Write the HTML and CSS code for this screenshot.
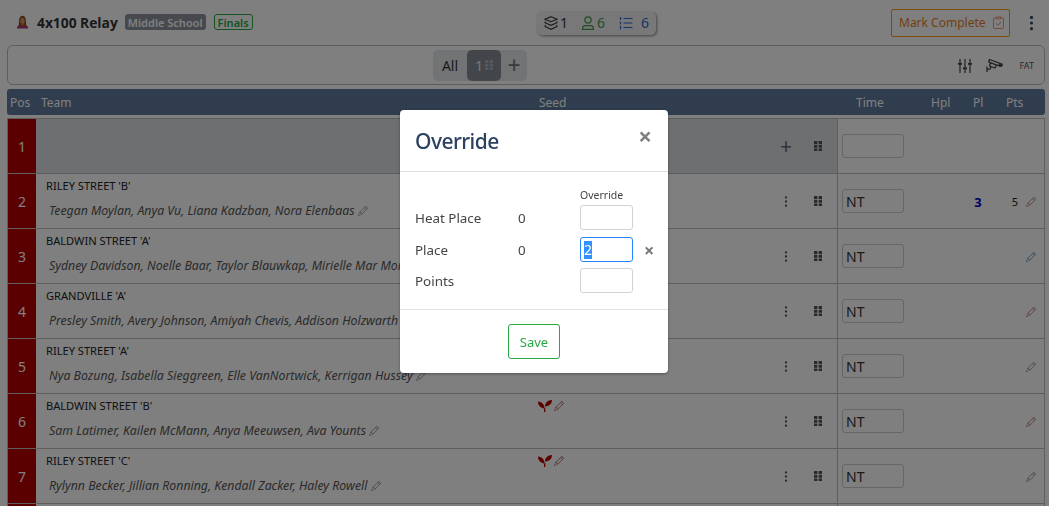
FILE: index.html
```html
<!DOCTYPE html>
<html lang="en">
<head>
<meta charset="utf-8">
<title>4x100 Relay</title>
<link rel="stylesheet" href="styles.css">
</head>
<body>
<svg class="defs" aria-hidden="true">
  <defs>
    <symbol id="pencil" viewBox="0 0 16 16"><path fill="currentColor" d="M12.146.146a.5.5 0 0 1 .708 0l3 3a.5.5 0 0 1 0 .708l-10 10a.5.5 0 0 1-.168.11l-5 2a.5.5 0 0 1-.65-.65l2-5a.5.5 0 0 1 .11-.168l10-10zM11.207 2.5 13.5 4.793 14.793 3.5 12.5 1.207 11.207 2.5zm1.586 3L10.5 3.207 4 9.707V10h.5a.5.5 0 0 1 .5.5v.5h.5a.5.5 0 0 1 .5.5v.5h.293l6.5-6.5zm-9.761 5.175-.106.106-1.528 3.821 3.821-1.528.106-.106A.5.5 0 0 1 5 12.5V12h-.5a.5.5 0 0 1-.5-.5V11h-.5a.5.5 0 0 1-.468-.325z"/></symbol>
    <symbol id="grip" viewBox="0 0 8 10.500"><path fill="currentColor" d="M0 0h3.400v3H0zM4.600 0H8v3H4.600zM0 3.750h3.400v3H0zM4.600 3.750H8v3H4.600zM0 7.500h3.400v3H0zM4.600 7.500H8v3H4.600z"/></symbol>
    <symbol id="kebab" viewBox="0 0 4 12"><circle fill="currentColor" cx="2" cy="1.500" r="1.250"/><circle fill="currentColor" cx="2" cy="6" r="1.250"/><circle fill="currentColor" cx="2" cy="10.500" r="1.250"/></symbol>
    <symbol id="seed" viewBox="0 0 14 12"><path fill="currentColor" d="M6.500 8.500C6.500 4.500 4 1.800 0 1.500C0 5.500 2.500 8 6.500 8.500zM7 6.500C7 2.800 9.500 .3 14 0C14 3.800 11.500 6.200 7 6.500zM6 7.500h1.300V12H6z"/></symbol>
  </defs>
</svg>

<main class="page">
  <header class="top">
    <div class="title-group">
      <svg class="emoji" viewBox="0 0 14 14" aria-hidden="true">
        <path fill="#b0306e" d="M1 14c0-3 2-4.200 6-4.200s6 1.200 6 4.200z"/>
        <path fill="#8a5420" d="M2.600 10.500c.7-1.500.6-3.300.7-5.500C3.500 2 5.200.4 7 .4S10.500 2 10.700 5c.1 2.200 0 4 .7 5.500-2.800.9-6 .9-8.800 0z"/>
        <ellipse fill="#d9925a" cx="7" cy="5.800" rx="2.400" ry="3"/>
        <path fill="#d9925a" d="M6 8h2v2.200H6z"/>
      </svg>
      <h1 class="event-title">4x100 Relay</h1>
      <span class="badge badge-dark">Middle School</span>
      <span class="badge badge-outline">Finals</span>
    </div>
    <div class="counts">
      <span class="count count-dark">
        <svg class="count-icon" viewBox="0 0 14 14" aria-hidden="true"><path fill="none" stroke="currentColor" stroke-width="1.100" d="M7 .7 13 3.200 7 5.700 1 3.200zM1.500 5.500 1 6.800l6 2.500 6-2.500-.5-1.300M1.500 9 1 10.400l6 2.900 6-2.900L12.500 9"/></svg>1
      </span>
      <span class="count count-green">
        <svg class="count-icon" viewBox="0 0 14 14" aria-hidden="true"><circle fill="none" stroke="currentColor" stroke-width="1.200" cx="7" cy="4" r="3.200"/><path fill="none" stroke="currentColor" stroke-width="1.200" d="M1.500 13.300c0-2.500 1-3.600 3-3.600h5c2 0 3 1.100 3 3.600z"/></svg>6
      </span>
      <span class="count count-blue">
        <svg class="count-icon" viewBox="0 0 14 14" aria-hidden="true"><path fill="none" stroke="currentColor" d="M4.500 2.500h9M4.500 7h9M4.500 11.500h9"/><path fill="none" stroke="currentColor" stroke-width="1.200" d="M1.500 1v3M1.500 5.500v3M1.500 10v3.500"/></svg>
        <span class="count-wide">6</span>
      </span>
    </div>
    <div class="top-actions">
      <button class="complete-btn" type="button">Mark Complete
        <svg class="clip-icon" viewBox="0 0 12 14" aria-hidden="true"><path fill="none" stroke="currentColor" d="M3.500 2H1.500a1 1 0 0 0-1 1v9.500a1 1 0 0 0 1 1h9a1 1 0 0 0 1-1V3a1 1 0 0 0-1-1H8.500M3.500 1h5v2h-5zM3.500 8l2 2 3.200-3.500"/></svg>
      </button>
      <svg class="menu-kebab" aria-hidden="true"><use href="#kebab"/></svg>
    </div>
  </header>

  <section class="toolbar">
    <div class="heats">
      <span class="heat">All</span>
      <span class="heat heat-active">1 <svg class="heat-grip" aria-hidden="true"><use href="#grip"/></svg></span>
      <span class="heat heat-add">+</span>
    </div>
    <div class="tools">
      <svg class="tool-sliders" viewBox="0 0 14 14" aria-hidden="true"><path fill="none" stroke="currentColor" stroke-width="1.200" d="M2 0v14M7 0v14M12 0v14"/><path fill="currentColor" d="M0 4h4v1.800H0zM5 8.500h4v1.800H5zM10 4h4v1.800h-4z"/></svg>
      <svg class="tool-camera" viewBox="0 0 17 14" aria-hidden="true"><path fill="none" stroke="currentColor" stroke-width="1.300" stroke-linejoin="round" d="M3.500 1 14 4.800l-.8 2.500L2.700 3.600zM4.500 4.500l-1 3 5.500 2 1.300-2.800M1 8v5.500M1 10.700h3l1.200-2.700"/><circle fill="currentColor" cx="14.800" cy="6.500" r="2.100"/></svg>
      <span class="tool-fat">FAT</span>
    </div>
  </section>

  <div class="columns">
    <span>Pos</span><span>Team</span><span>Seed</span><span>Time</span><span>Hpl</span><span>Pl</span><span>Pts</span>
  </div>

  <section class="table">
    <div class="row row-empty">
      <div class="pos">1</div>
      <div class="team team-empty">
        <div class="actions">
          <span class="plus">+</span>
          <svg class="grip" aria-hidden="true"><use href="#grip"/></svg>
        </div>
      </div>
      <div class="times"><span class="time-input"></span></div>
    </div>

    <div class="row">
      <div class="pos">2</div>
      <div class="team">
        <div class="info">
          <div class="name-line"><span class="name">RILEY STREET 'B'</span></div>
          <div class="athletes">Teegan Moylan, Anya Vu, Liana Kadzban, Nora Elenbaas <svg class="pencil" aria-hidden="true"><use href="#pencil"/></svg></div>
        </div>
        <div class="actions"><svg class="kebab" aria-hidden="true"><use href="#kebab"/></svg><svg class="grip" aria-hidden="true"><use href="#grip"/></svg></div>
      </div>
      <div class="times"><span class="time-input">NT</span><span class="pl">3</span><span class="pts">5</span><svg class="pencil pencil-red" aria-hidden="true"><use href="#pencil"/></svg></div>
    </div>

    <div class="row">
      <div class="pos">3</div>
      <div class="team">
        <div class="info">
          <div class="name-line"><span class="name">BALDWIN STREET 'A'</span></div>
          <div class="athletes">Sydney Davidson, Noelle Baar, Taylor Blauwkap, Mirielle Mar Morgan <svg class="pencil" aria-hidden="true"><use href="#pencil"/></svg></div>
        </div>
        <div class="actions"><svg class="kebab" aria-hidden="true"><use href="#kebab"/></svg><svg class="grip" aria-hidden="true"><use href="#grip"/></svg></div>
      </div>
      <div class="times"><span class="time-input">NT</span><svg class="pencil pencil-blue" aria-hidden="true"><use href="#pencil"/></svg></div>
    </div>

    <div class="row">
      <div class="pos">4</div>
      <div class="team">
        <div class="info">
          <div class="name-line"><span class="name">GRANDVILLE 'A'</span></div>
          <div class="athletes">Presley Smith, Avery Johnson, Amiyah Chevis, Addison Holzwarth <svg class="pencil" aria-hidden="true"><use href="#pencil"/></svg></div>
        </div>
        <div class="actions"><svg class="kebab" aria-hidden="true"><use href="#kebab"/></svg><svg class="grip" aria-hidden="true"><use href="#grip"/></svg></div>
      </div>
      <div class="times"><span class="time-input">NT</span><svg class="pencil pencil-red" aria-hidden="true"><use href="#pencil"/></svg></div>
    </div>

    <div class="row">
      <div class="pos">5</div>
      <div class="team">
        <div class="info">
          <div class="name-line"><span class="name">RILEY STREET 'A'</span></div>
          <div class="athletes">Nya Bozung, Isabella Sieggreen, Elle VanNortwick, Kerrigan Hussey <svg class="pencil" aria-hidden="true"><use href="#pencil"/></svg></div>
        </div>
        <div class="actions"><svg class="kebab" aria-hidden="true"><use href="#kebab"/></svg><svg class="grip" aria-hidden="true"><use href="#grip"/></svg></div>
      </div>
      <div class="times"><span class="time-input">NT</span><svg class="pencil" aria-hidden="true"><use href="#pencil"/></svg></div>
    </div>

    <div class="row">
      <div class="pos">6</div>
      <div class="team">
        <div class="info">
          <div class="name-line"><span class="name">BALDWIN STREET 'B'</span><span class="seed"><svg class="seed-icon" aria-hidden="true"><use href="#seed"/></svg><svg class="pencil pencil-seed" aria-hidden="true"><use href="#pencil"/></svg></span></div>
          <div class="athletes">Sam Latimer, Kailen McMann, Anya Meeuwsen, Ava Younts <svg class="pencil" aria-hidden="true"><use href="#pencil"/></svg></div>
        </div>
        <div class="actions"><svg class="kebab" aria-hidden="true"><use href="#kebab"/></svg><svg class="grip" aria-hidden="true"><use href="#grip"/></svg></div>
      </div>
      <div class="times"><span class="time-input">NT</span><svg class="pencil pencil-red" aria-hidden="true"><use href="#pencil"/></svg></div>
    </div>

    <div class="row">
      <div class="pos">7</div>
      <div class="team">
        <div class="info">
          <div class="name-line"><span class="name">RILEY STREET 'C'</span><span class="seed"><svg class="seed-icon" aria-hidden="true"><use href="#seed"/></svg><svg class="pencil pencil-seed" aria-hidden="true"><use href="#pencil"/></svg></span></div>
          <div class="athletes">Rylynn Becker, Jillian Ronning, Kendall Zacker, Haley Rowell <svg class="pencil" aria-hidden="true"><use href="#pencil"/></svg></div>
        </div>
        <div class="actions"><svg class="kebab" aria-hidden="true"><use href="#kebab"/></svg><svg class="grip" aria-hidden="true"><use href="#grip"/></svg></div>
      </div>
      <div class="times"><span class="time-input">NT</span><svg class="pencil" aria-hidden="true"><use href="#pencil"/></svg></div>
    </div>

    <div class="row">
      <div class="pos"></div>
      <div class="team"></div>
      <div class="times"></div>
    </div>
  </section>
</main>

<div class="backdrop"></div>

<div class="modal" role="dialog" aria-label="Override">
  <div class="modal-head">
    <h2 class="modal-title">Override</h2>
    <span class="modal-close">×</span>
  </div>
  <div class="modal-body">
    <span></span><span></span><span class="override-label">Override</span><span></span>
    <span>Heat Place</span><span>0</span><span class="field"></span><span></span>
    <span>Place</span><span>0</span><span class="field field-focus"><span class="selected">2</span></span><span class="clear">×</span>
    <span>Points</span><span></span><span class="field field-last"></span><span></span>
  </div>
  <div class="modal-foot">
    <button class="save-btn" type="button">Save</button>
  </div>
</div>
</body>
</html>
```

FILE: styles.css
```css
* { box-sizing: border-box; }
html, body { height: 100%; }
body {
  margin: 0;
  overflow: hidden;
  background: #fff;
  color: #333;
  font-family: "Noto Sans", "Open Sans", sans-serif;
  font-size: 13px;
}
.defs { display: none; }
.page { height: 100vh; overflow: hidden; padding: 0 4px 0 7px; }

/* top header */
.top {
  display: grid;
  grid-template-columns: 530px 119px 1fr;
  height: 45px;
  align-items: center;
}
.title-group { display: flex; align-items: center; padding-left: 9px; padding-bottom: 1px; }
.emoji { width: 13px; height: 14px; margin-right: 8px; }
.event-title { margin: 0 7px 0 0; font-size: 13.800px; font-weight: 700; color: #333; font-family: "Open Sans", sans-serif; }
.badge {
  display: inline-flex;
  align-items: center;
  height: 16px;
  padding: 0 3px;
  border-radius: 3px;
  font-size: 11px;
  font-weight: 600;
  margin-right: 8px;
}
.badge-dark { background: #8d959f; color: #fff; }
.badge-outline { border: 1px solid #28a745; color: #28a745; }

.counts {
  display: flex;
  align-items: center;
  height: 23px;
  margin-top: 1px;
  padding-left: 7px;
  gap: 3px;
  border-radius: 5px;
  background: #f0f0f0;
  box-shadow: 1px 1px 3px rgba(0, 0, 0, .45);
  font-size: 14px;
}
.count { display: inline-flex; align-items: center; gap: 2px; margin-right: 8px; line-height: 1; }
.count-icon { width: 14px; height: 14px; }
.count-dark { color: #343a40; }
.count-green { color: #3f9c4f; margin-left: 2px; }
.count-blue { color: #2a6bd0; margin-left: 3px; }
.count-wide { margin-left: 6px; }

.top-actions { display: flex; align-items: center; justify-content: flex-end; gap: 19px; padding-right: 11px; }
.complete-btn {
  display: inline-flex;
  align-items: center;
  gap: 7px;
  width: 119px;
  height: 28px;
  padding: 0 7px;
  border: 1px solid #f39c12;
  border-radius: 2px;
  background: transparent;
  color: #e67e22;
  font: 12px "Noto Sans", sans-serif;
  white-space: nowrap;
}
.clip-icon { width: 11px; height: 13px; flex: none; color: #e58a60; }
.menu-kebab { width: 5px; height: 16px; color: #34495e; }

/* toolbar */
.toolbar {
  display: flex;
  align-items: center;
  justify-content: space-between;
  height: 40px;
  padding-left: 425px;
  padding-right: 10px;
  border: 1px solid #bbb;
  border-radius: 6px;
}
.heats {
  display: flex;
  height: 31px;
  border-radius: 5px;
  background: #e3e6e9;
  color: #333;
  font-size: 14px;
}
.heat { display: flex; align-items: center; justify-content: center; width: 34px; }
.heat-active { border-radius: 5px; gap: 2px; background: #848c96; color: #e8e8e8; font-size: 15px; }
.heat-grip { width: 8px; height: 10.500px; color: #a9b0b8; }
.heat-add { width: 26px; color: #6c757d; font-size: 23px; }
.tools { display: flex; align-items: center; gap: 14px; margin-top: 1px; color: #444; }
.tool-sliders { width: 14px; height: 14px; }
.tool-camera { width: 17px; height: 15px; }
.tool-fat { font-size: 9px; margin-left: 2px; color: #555; }

/* column headings */
.columns {
  display: grid;
  grid-template-columns: 31px 498px 317px 75px 42px 33px 1fr;
  align-items: center;
  height: 26px;
  margin-top: 4px;
  padding-left: 3px;
  border-radius: 3px;
  background: #5f7a9e;
  color: #fff;
  font-size: 12px;
}

/* table */
.table { margin-top: 3px; border-top: 1px solid #bcbcbc; border-right: 1px solid #bcbcbc; border-left: 1px solid #bcbcbc; }
.row {
  display: grid;
  grid-template-columns: 28px 802px 1fr;
  height: 55px;
  border-bottom: 1px solid #bcbcbc;
}
.pos {
  display: flex;
  align-items: center;
  justify-content: center;
  background: #b40000;
  color: #fff;
  font-size: 14px;
}
.team {
  display: flex;
  align-items: center;
  justify-content: space-between;
  padding-left: 10px;
  border-right: 1px solid #bcbcbc;
}
.team-empty { justify-content: flex-end; background: #dcdfe3; }
.info { flex: 1; min-width: 0; align-self: flex-start; }
.name-line { display: flex; height: 28px; padding-top: 4px; align-items: flex-start; }
.name { width: 492px; font-size: 11.100px; line-height: 15px; color: #222; }
.seed { display: flex; align-items: center; gap: 2px; color: #bc0000; height: 14px; margin-top: 1px; }
.seed-icon { width: 14px; height: 12px; }
.athletes {
  padding-left: 3px;
  font-size: 12.300px;
  font-style: italic;
  line-height: 18px;
  color: #555;
  white-space: nowrap;
}
.pencil { width: 10px; height: 10px; color: #999; vertical-align: -1px; }
.pencil-red { color: #c08080; }
.pencil-blue { color: #6f9ac8; }
.pencil-seed { color: #b07070; }
.actions { display: flex; align-items: center; flex: none; width: 57px; padding-right: 14px; justify-content: space-between; color: #555; }
.plus { font-size: 21px; line-height: 1; color: #666; }
.kebab { width: 4px; height: 11px; margin-left: 4px; }
.grip { width: 8px; height: 10.500px; margin-right: 1px; }

.times {
  display: grid;
  grid-template-columns: 62px 66px 16px 22px 14px 18px;
  align-items: center;
  padding-left: 4px;
}
.time-input {
  display: flex;
  align-items: center;
  height: 24px;
  padding-left: 3px;
  border: 1px solid #ccc;
  border-radius: 3px;
  font-size: 14px;
  color: #333;
}
.pl { grid-column: 3; text-align: center; font-weight: 700; color: #0000c8; font-size: 13px; margin-top: 2px; }
.pts { grid-column: 5; text-align: center; font-size: 11px; color: #222; }
.times .pencil { grid-column: 6; justify-self: center; margin-top: 2px; }

/* overlay */
.backdrop { position: fixed; inset: 0; background: rgba(0, 0, 0, .5); }
.modal {
  position: fixed;
  left: 400px;
  top: 110px;
  width: 268px;
  height: 263px;
  background: #fff;
  border-radius: 4px;
  box-shadow: 0 1px 3px rgba(0, 0, 0, .35);
  color: #444;
}
.modal-head {
  display: flex;
  justify-content: space-between;
  align-items: center;
  height: 62px;
  padding: 0 15px;
  border-bottom: 1px solid #dee2e6;
}
.modal-title { margin: 0; font-size: 21px; letter-spacing: -.55px; font-weight: 500; color: #2c4260; }
.modal-close { font-size: 24px; font-weight: 700; color: #808080; margin-top: -10px; margin-right: 1px; }
.modal-body {
  display: grid;
  grid-template-columns: 103px 62px 53px 1fr;
  align-content: start;
  align-items: center;
  row-gap: 7px;
  height: 138px;
  padding: 16px 0 0 15px;
  border-bottom: 1px solid #dee2e6;
  font-size: 13.400px;
}
.override-label { font-size: 10.500px; line-height: 14px; margin-bottom: -4px; }
.field { height: 25px; display: flex; align-items: center; padding-left: 3px; border: 1px solid #ced4da; border-radius: 3px; }
.field-focus { border-color: #2684ff; }
.field-last { margin-top: -1px; }
.selected { background: #3390ff; color: #fff; font-size: 14px; line-height: 18px; }
.clear { padding-left: 11px; font-size: 18px; font-weight: 700; color: #777; line-height: 1; }
.modal-foot { display: flex; justify-content: center; padding-top: 14px; }
.save-btn {
  width: 52px;
  height: 35px;
  padding: 0;
  border: 1px solid #28a745;
  border-radius: 3px;
  background: #fff;
  color: #28a745;
  font: 13px "Noto Sans", sans-serif;
}
```
